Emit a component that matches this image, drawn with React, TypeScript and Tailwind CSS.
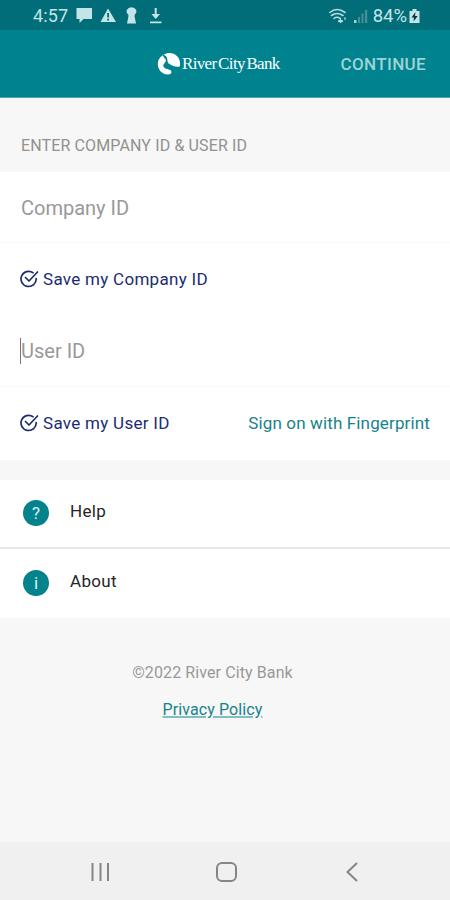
import React from "react";

function StatusBar() {
  return (
    <div className="flex h-[29.500px] shrink-0 items-center bg-[#006d78] pb-px pl-[33px] pr-[30px] pt-[3px] text-[#c4e5e8]">
      <span className="w-[42px] whitespace-nowrap text-[18px] leading-none tracking-[0.1px]">4:57</span>
      <svg className="h-[17px] w-[94px]" viewBox="75 7 94 17" fill="currentColor">
        <path d="M76.500 8H92V19H83.500L79.500 23V19H76.500Z" />
        <path fillRule="evenodd" d="M108 8.500 116 22H100.500ZM107.200 13V17.500H109V13ZM107.200 18.700V20.400H109V18.700Z" />
        <path d="M131.500 7.200A4.800 4.200 0 0 1 134.800 14.500L134.500 16 136 23.500H127L128.500 16 128.200 14.500A4.800 4.200 0 0 1 131.500 7.200Z" />
        <path d="M154.700 8H156.700V14H160L155.700 19 151.400 14H154.700ZM150 21.500H161.500V23.200H150Z" />
      </svg>
      <svg className="ml-auto h-[18px] w-[42px]" viewBox="327 6 42 18" fill="none">
        <g stroke="#b4dce0" strokeWidth="1.600" strokeLinecap="round">
          <path d="M327.800 11.500Q335 5.500 343 11.500M329.500 14.500Q335 10.500 341 14.500M332 17.500Q335 15 338 17.500" />
          <path d="M337 20.200H340" strokeWidth="2.200" />
          <path d="M338.500 17V21.500M343 16.500V18.500" strokeWidth="1.200" />
        </g>
        <path d="M352 22V19H354.500V22Z" fill="#a2d0d5" />
        <path d="M356 22V16H358V22ZM359.500 22V12.500H361.500V22ZM363 22V9H365.200V22Z" fill="#459099" />
      </svg>
      <span className="ml-[2px] whitespace-nowrap text-[18.500px] leading-none">84%</span>
      <svg className="ml-[2px] h-[16px] w-[11px]" viewBox="0 0 11 16">
        <path d="M3.500 1H7.500V3H10.500V15H0.500V3H3.500Z" fill="#c4e5e8" />
        <path d="M6.500 4 2.500 9.500H5L4.500 13.500 8.700 8H6Z" fill="#07373c" />
      </svg>
    </div>
  );
}

function Logo() {
  return (
    <div className="flex items-center pt-[2px] text-white">
      <svg className="h-[22px] w-[24px]" viewBox="157 53 24 22">
        <path fill="#fff" d="M163.500 54.700C170 51 177.500 54 179.500 60C180.200 62.500 180.300 65 179.700 66.500C176.500 67.200 172.500 66.200 168.300 63.200C167 61.500 167.800 59 166.700 57.200C166.200 56 165 55.200 163.500 54.700Z" />
        <path fill="#fff" d="M162.800 55.200C159.500 57.200 157.500 60.500 157.800 64.500C158.300 70.500 163 75 168.500 74.500C171 74.500 172.300 72.500 170.800 70.600C169 68.800 165 69.300 163.600 66.700C162.500 64.200 165.700 62.700 165.900 60.500C165.900 58.600 163.600 57.800 162.800 55.200Z" />
      </svg>
      <span className="ml-px whitespace-nowrap font-['Liberation_Serif',serif] text-[17px] leading-[20px] tracking-[-0.65px] [word-spacing:-2px]">River City Bank</span>
    </div>
  );
}

function SaveOption({ label }: { label: string }) {
  return (
    <div className="flex items-center gap-1 text-[#1b2c70]">
      <svg className="ml-px h-[19px] w-[19px]" viewBox="0 0 19 19" fill="none" stroke="currentColor" strokeWidth="1.700" strokeLinecap="round" strokeLinejoin="round">
        <path d="M13 2.700A7.600 7.600 0 1 0 16.200 8.500" />
        <path d="M5.500 7.500 9 11 17.500 2" />
      </svg>
      <span className="whitespace-nowrap pt-px text-[17px] tracking-[0.29px]">{label}</span>
    </div>
  );
}

function MenuRow({ glyph, label }: { glyph: string; label: string }) {
  return (
    <div className="flex items-center pl-[23px]">
      <span className="flex h-[26px] w-[26px] items-center justify-center rounded-full bg-[#04838c] pt-px text-[17px] leading-none text-[#d7f3f4]">{glyph}</span>
      <span className="ml-[21px] pb-[5px] text-[17px] leading-5 tracking-[0.3px] text-[#252525]">{label}</span>
    </div>
  );
}

export default function App() {
  return (
    <div className="flex h-[900px] w-[450px] flex-col overflow-hidden bg-[#f7f7f7] font-[Roboto,sans-serif]">
      <StatusBar />
      <header className="flex h-[68px] shrink-0 items-center justify-between border-b border-[#4da5ad] bg-[#00838f] pl-[157px] pr-6">
        <Logo />
        <span className="pt-[3px] text-[17px] font-medium tracking-[0.35px] text-[#9fd3d7]">CONTINUE</span>
      </header>
      <main className="flex flex-1 flex-col">
        <h1 className="flex h-[74.500px] items-end pb-[14px] pl-[21px] text-[16px] text-[#919191]">
          <span className="whitespace-nowrap tracking-[0.13px]">ENTER COMPANY ID &amp; USER ID</span>
        </h1>
        <section className="bg-white">
          <div className="flex h-[71px] items-center border-b border-[#fafafa] pl-[21px] pt-[2px] text-[20px] text-[#999]">
            Company ID
          </div>
          <div className="flex h-[73px] items-center border-b border-[#fdfdfd] pl-[19px]">
            <SaveOption label="Save my Company ID" />
          </div>
          <div className="flex h-[71px] items-center border-b border-[#fafafa] pl-5 text-[20px] text-[#999]">
            <span className="h-[26px] w-px bg-[#777]" />
            User ID
          </div>
          <div className="flex h-[73px] items-center justify-between pl-[19px] pr-5">
            <SaveOption label="Save my User ID" />
            <span className="whitespace-nowrap text-[17px] tracking-[0.14px] text-[#16838a]">Sign on with Fingerprint</span>
          </div>
        </section>
        <section className="mt-5 bg-white">
          <div className="grid h-[67px] pb-px">
            <MenuRow glyph="?" label="Help" />
          </div>
          <div className="grid h-[71px] border-t-2 border-[#e7e7e7] pb-px">
            <MenuRow glyph="i" label="About" />
          </div>
        </section>
        <footer className="flex w-[425px] flex-col items-center pt-[43px] text-[16px] leading-6">
          <span className="tracking-[0.1px] text-[#999]">©2022 River City Bank</span>
          <a className="mt-[13px] tracking-[0.1px] text-[#16838a] underline decoration-[#81bec2] decoration-2 underline-offset-1">Privacy Policy</a>
        </footer>
      </main>
      <nav className="flex h-[58px] shrink-0 items-center bg-[#f0f0f0] pl-[91px] pt-[2px]">
        <svg className="h-5 w-5" viewBox="0 0 20 20" stroke="#858585" strokeWidth="2">
          <path d="M1.500 1V19M9.500 1V19M17 1V19" />
        </svg>
        <span className="ml-[105px] h-5 w-[21px] rounded-[6px] border-2 border-[#858585]" />
        <svg className="ml-[108px] h-5 w-[14px]" viewBox="0 0 14 20" fill="none" stroke="#858585" strokeWidth="2">
          <path d="M12 1 2.500 10 12 19" />
        </svg>
      </nav>
    </div>
  );
}
